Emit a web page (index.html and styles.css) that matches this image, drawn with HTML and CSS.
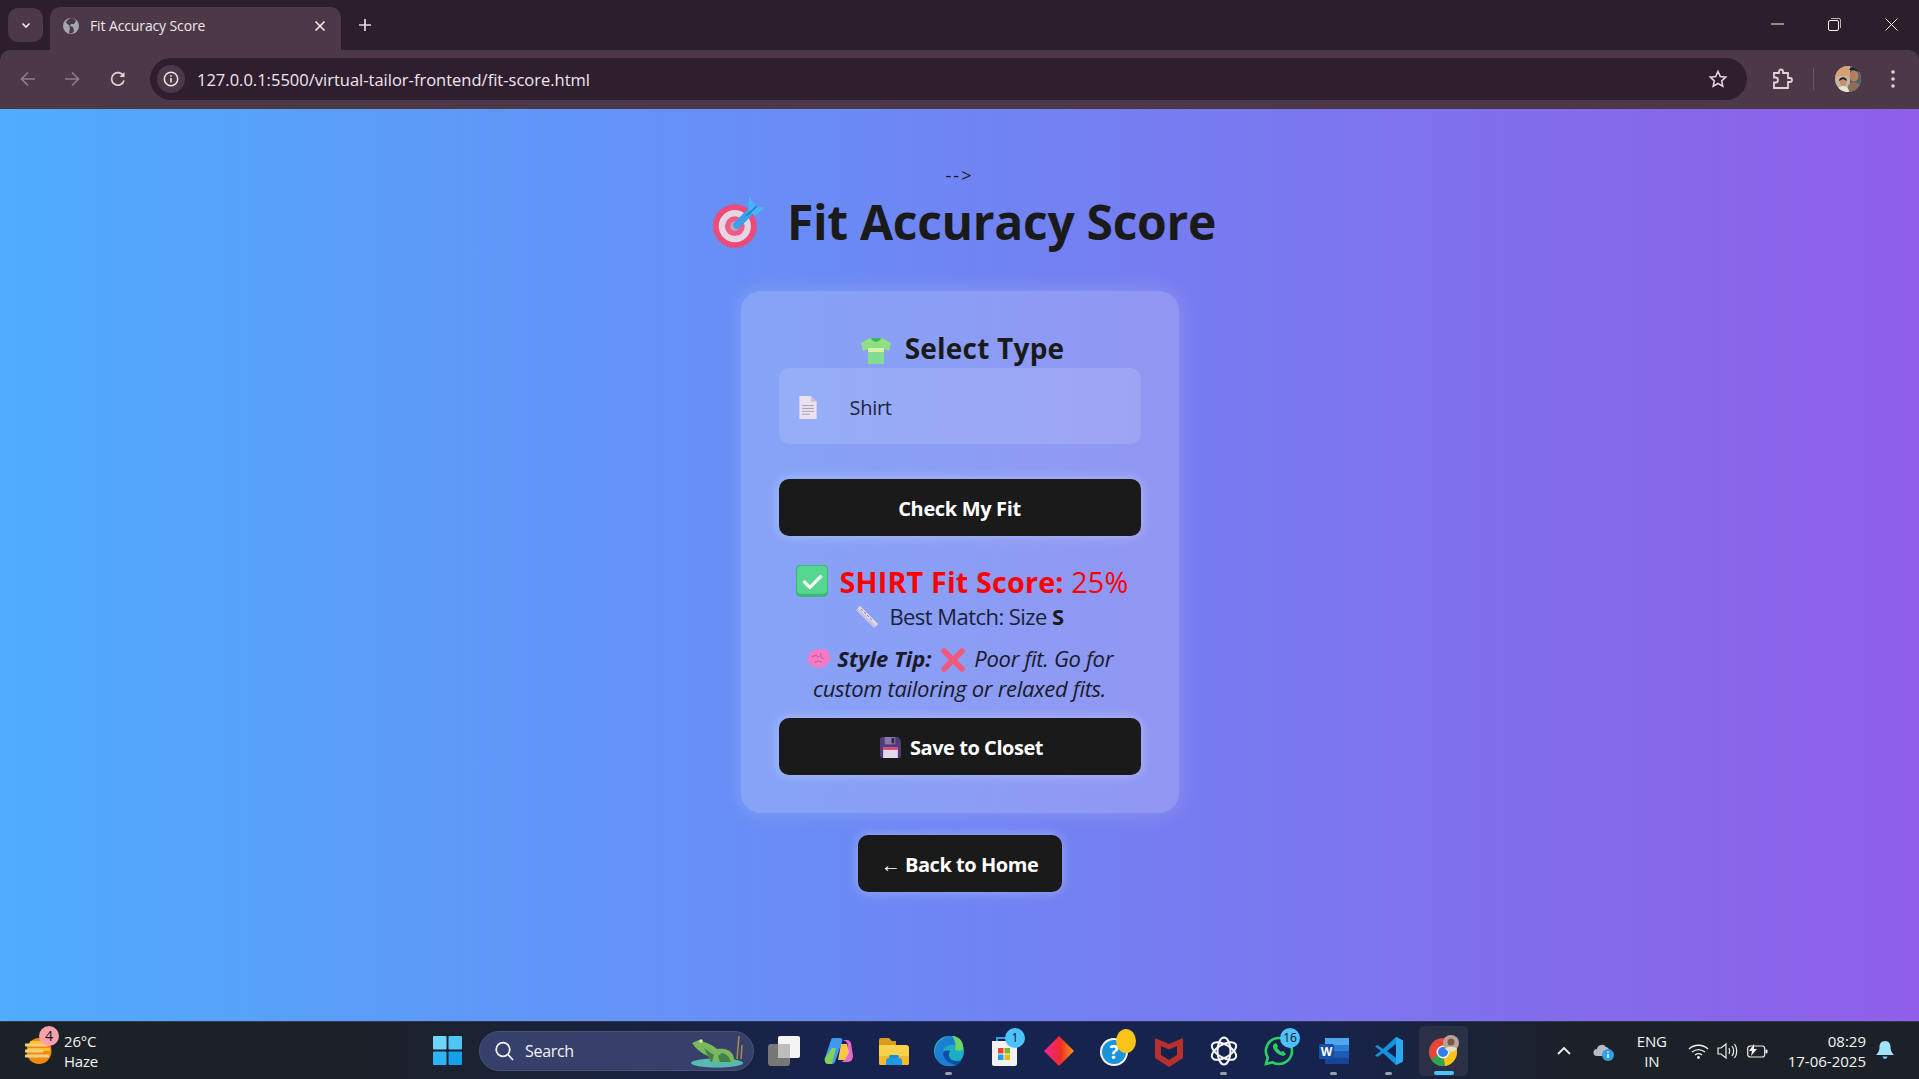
FILE: index.html
```html
<!DOCTYPE html>
<html lang="en">
<head>
<meta charset="utf-8">
<title>Fit Accuracy Score</title>
<link rel="stylesheet" href="styles.css">
</head>
<body>
<div class="window">
  <header class="tabstrip">
    <button class="tab-list"><svg width="12" height="12" viewBox="0 0 12 12"><path d="M2.500 4.500 6 8l3.500-3.500" fill="none" stroke="#f0e4ee" stroke-width="1.700"/></svg></button>
    <div class="tab">
      <svg class="favicon" width="18" height="18" viewBox="0 0 18 18"><circle cx="9" cy="9" r="8" fill="#a3a7ae"/><path d="M9 1c-3 1-5 3-5 5l3 2 1 3-1 5c2 1 4 0 5-2l-1-4-3-1 1-2 3 0 2-3C13 2 11 1 9 1z" fill="#4c3847"/></svg>
      <span class="tab-title">Fit Accuracy Score</span>
      <svg class="tab-close" width="12" height="12" viewBox="0 0 12 12"><path d="M1.500 1.500l9 9m0-9l-9 9" stroke="#f4ecf2" stroke-width="1.600"/></svg>
    </div>
    <svg class="new-tab" width="14" height="14" viewBox="0 0 14 14"><path d="M7 1v12M1 7h12" stroke="#e8d8e4" stroke-width="1.700"/></svg>
    <div class="win-controls">
      <svg width="13" height="13" viewBox="0 0 13 13"><path d="M0 6h13" stroke="#f2f2f2" stroke-width="1"/></svg>
      <svg width="13" height="13" viewBox="0 0 13 13"><rect x=".5" y="2.500" width="10" height="10" rx="1.500" fill="none" stroke="#f2f2f2"/><path d="M3 .5h8a1.500 1.500 0 0 1 1.500 1.500v8" fill="none" stroke="#b9b0b8"/></svg>
      <svg width="13" height="13" viewBox="0 0 13 13"><path d="M.5.500l12 12m0-12l-12 12" stroke="#f2f2f2" stroke-width="1"/></svg>
    </div>
  </header>
  <nav class="toolbar">
    <svg class="tool tool-back" width="18" height="18" viewBox="0 0 18 18"><path d="M16 9H3m6-6.500L2.500 9 9 15.500" fill="none" stroke="#8d7c8b" stroke-width="1.700"/></svg>
    <svg class="tool tool-forward" width="18" height="18" viewBox="0 0 18 18"><path d="M2 9h13M9 2.500 15.500 9 9 15.500" fill="none" stroke="#8d7c8b" stroke-width="1.700"/></svg>
    <svg class="tool tool-reload" width="18" height="18" viewBox="0 0 18 18"><path d="M14.500 6A6.300 6.300 0 1 0 15 10.500" fill="none" stroke="#e2d2de" stroke-width="1.700"/><path d="M15.500 2v5h-5z" fill="#e2d2de"/></svg>
    <div class="omnibox">
      <span class="site-info"><svg width="16" height="16" viewBox="0 0 16 16"><circle cx="8" cy="8" r="6.700" fill="none" stroke="#efe3ec" stroke-width="1.500"/><path d="M8 7v4.500M8 4.200v1.600" stroke="#efe3ec" stroke-width="1.600"/></svg></span>
      <span class="url">127.0.0.1:5500/virtual-tailor-frontend/fit-score.html</span>
      <svg class="star" width="20" height="20" viewBox="0 0 20 20"><path d="M10 2.500l2.300 5 5.400.6-4 3.700 1.100 5.400L10 14.500l-4.800 2.700 1.100-5.400-4-3.700 5.400-.6z" fill="none" stroke="#e2d2de" stroke-width="1.600"/></svg>
    </div>
    <svg class="ext" width="22" height="22" viewBox="0 0 22 22"><path d="M3 5h5V3.500a2 2 0 0 1 4 0V5h5v5h2a2 2 0 0 1 0 4h-2v6H3v-5.500h1.500a2.300 2.300 0 0 0 0-5H3z" fill="none" stroke="#e2d2de" stroke-width="1.800"/></svg>
    <span class="sep"></span>
    <svg class="avatar" width="26" height="26" viewBox="0 0 26 26"><defs><clipPath id="av"><circle cx="13" cy="13" r="13"/></clipPath></defs><g clip-path="url(#av)"><rect width="26" height="26" fill="#c9b5a5"/><rect x="15" width="11" height="26" fill="#4f6068"/><rect y="0" width="14" height="10" fill="#d9a070"/><ellipse cx="19" cy="10" rx="4.500" ry="5.500" fill="#b97d5c"/><path d="M14 4c2-4 9-4 10 2l-5-2z" fill="#1c2230"/><path d="M12 26c0-7 3-10 7-10s7 3 7 10z" fill="#8a7058"/><ellipse cx="8" cy="16" rx="3.500" ry="4" fill="#c4906c"/><path d="M4 15c0-5 8-5 8 0l-4-2z" fill="#222"/><path d="M2 26c0-4 3-6 6-6s6 2 6 6z" fill="#dfe8d0"/></g></svg>
    <svg class="menu" width="6" height="20" viewBox="0 0 6 20"><circle cx="3" cy="3" r="1.800" fill="#e2d2de"/><circle cx="3" cy="10" r="1.800" fill="#e2d2de"/><circle cx="3" cy="17" r="1.800" fill="#e2d2de"/></svg>
  </nav>

  <main class="page">
    <p class="stray">--&gt;</p>
    <h1 class="title">
      <svg class="emoji-target" viewBox="0 0 52 52"><circle cx="22" cy="30" r="21" fill="#ec4a78"/><circle cx="22" cy="30" r="15.500" fill="#e6d6e4"/><circle cx="22" cy="30" r="9.500" fill="#ef5a86"/><circle cx="22" cy="30" r="4.500" fill="#b8a8b8"/><path d="M24 29 36 17" stroke="#3aa0ea" stroke-width="7" stroke-linecap="round"/><path d="M35 15 36 1l6 10 9 1-9 8z" fill="#48b4f4"/><path d="M33 20 43 11" stroke="#1f7fd0" stroke-width="1.500"/></svg>
      <span>Fit Accuracy Score</span>
    </h1>
    <section class="card">
      <h2 class="card-heading">
        <svg class="emoji-shirt" viewBox="0 0 32 28"><path d="M10 1h12l9 5-2 8-5-2v15H8V12l-5 2-2-8z" fill="#8fe080"/><rect x="8" y="11" width="16" height="4" fill="#d8f0a8"/><path d="M8 15h16v12H8z" fill="#82dc92"/><path d="M11 1c1 5 9 5 10 0z" fill="#35b868"/></svg>
        <span>Select Type</span>
      </h2>
      <div class="select">
        <svg class="emoji-doc" viewBox="0 0 20 26"><path d="M1 1h12l6 6v18H1z" fill="#ebe2f0"/><path d="M13 1l6 6h-6z" fill="#cdc0d4"/><path d="M4 11h12M4 14h12M4 17h12M4 20h8" stroke="#a79bb0" stroke-width="1"/></svg>
        <span>Shirt</span>
      </div>
      <button class="btn btn-check">Check My Fit</button>
      <div class="score">
        <svg class="emoji-check" viewBox="0 0 30 30"><rect width="30" height="30" rx="4" fill="#3fb878"/><rect x="1" y="1" width="28" height="26" rx="4" fill="#57d690"/><path d="M7 15l6 6 11-11" fill="none" stroke="#f4fbf6" stroke-width="3"/></svg>
        <span class="score-text"><strong>SHIRT Fit Score:</strong> 25%</span>
      </div>
      <p class="match"><svg class="emoji-ruler" viewBox="0 0 24 24"><path d="M1 5 5 1 23 19 19 23z" fill="#c9c2dc"/><path d="M5 1l18 18-2 2L3 3z" fill="#dfd9ec"/><path d="M6 4l2 2M9 7l2 2M12 10l2 2M15 13l2 2" stroke="#9184a8" stroke-width="1"/></svg>Best Match: Size <strong>S</strong></p>
      <p class="tip">
        <svg class="emoji-brain" viewBox="0 0 24 22"><path d="M12 2c4-3 10 0 10 5 2 3 1 7-3 8 0 3-3 4-5 3l-2 3-1-3C7 19 1 16 1 10 1 5 7 0 12 2z" fill="#f27cc4"/><path d="M5 9c3-3 5-2 7 0m2-4c-2 3 0 5 3 5m-9 4c2-2 5-2 7 0" fill="none" stroke="#d652a6" stroke-width="1.100"/></svg>
        <strong>Style Tip:</strong>
        <svg class="emoji-x" viewBox="0 0 24 24"><path d="M3 3 21 21M21 3 3 21" stroke="#f2587a" stroke-width="5.500" stroke-linecap="round"/></svg>
        Poor fit. Go for custom tailoring or relaxed fits.
      </p>
      <button class="btn btn-save">
        <svg class="emoji-floppy" viewBox="0 0 20 20"><path d="M2 0h15l3 3v15a2 2 0 0 1-2 2H2a2 2 0 0 1-2-2V2a2 2 0 0 1 2-2z" fill="#4f3b78"/><rect x="4.500" y="0" width="10" height="7" fill="#8b7aa8"/><rect x="11" y="1" width="2.500" height="5" fill="#2e2446"/><rect x="3" y="10" width="14" height="10" fill="#e4d8ec"/><rect x="3" y="10" width="14" height="2.200" fill="#ea3a60"/></svg>
        Save to Closet
      </button>
    </section>
    <a class="btn btn-back">← Back to Home</a>
  </main>

  <footer class="taskbar">
    <div class="widget">
      <span class="weather">
        <svg width="28" height="28" viewBox="0 0 28 28"><ellipse cx="14" cy="14" rx="12.500" ry="13" fill="#f28a10"/><path d="M5 4h18v4H5zM3 11h22v3H3z" fill="#fac22e"/><path d="M1 8h20M1 14h16M1 19h22" stroke="#f0d080" stroke-width="3" stroke-linecap="round"/></svg>
        <span class="badge badge-pink">4</span>
      </span>
      <span class="weather-text"><span>26°C</span><span>Haze</span></span>
    </div>
    <div class="apps">
      <svg class="win" viewBox="0 0 30 30"><rect width="14" height="14" y="0" x="0" rx="1" fill="#6fd6fb"/><rect width="14" height="14" y="0" x="16" rx="1" fill="#4fc4f5"/><rect width="14" height="14" y="16" x="0" rx="1" fill="#2eb4f2"/><rect width="14" height="14" y="16" x="16" rx="1" fill="#16a0ec"/></svg>
      <div class="search">
        <svg width="22" height="22" viewBox="0 0 22 22"><circle cx="10" cy="9.500" r="6.800" fill="none" stroke="#f0f0f0" stroke-width="1.800"/><path d="M15 14.500l5 5.500" stroke="#f0f0f0" stroke-width="1.800"/></svg>
        <span>Search</span>
        <svg class="frog" width="56" height="36" viewBox="0 0 56 36"><ellipse cx="28" cy="30" rx="26" ry="4.500" fill="#58b9b0"/><path d="M48 26 50 3M52 26l1-14" stroke="#a08a50" stroke-width="1.600"/><path d="M3 10l7-3 5 2c6 2 10 4 13 7 6-1 13 0 16 6l2 7H24l-5-6C12 20 6 15 3 10z" fill="#79b85e"/><path d="M15 15l10 7-2 7h8l-2-6 4-3c4 1 7 3 9 9H22z" fill="#3f8248"/><circle cx="12" cy="8" r="1.800" fill="#e4e88a"/></svg>
      </div>
      <span class="slot">
        <svg width="32" height="30" viewBox="0 0 32 30"><rect x="0" y="8" width="22" height="22" rx="3" fill="#777"/><rect x="10" y="0" width="22" height="22" rx="2" fill="#f4f4f4"/><rect x="10" y="8" width="12" height="14" fill="#bdbdbd"/></svg>
      </span>
      <span class="slot">
        <svg width="30" height="30" viewBox="0 0 30 30"><path d="M9 2h7c2 0 3 2 2 4l-7 20c-1 2-3 2-4 2H4c-2 0-4-3-3-6L7 4c0-1 1-2 2-2z" fill="#3d9af0"/><path d="M8 12h4l-4 16H4c-2 0-4-3-3-6z" fill="#86cf5a"/><path d="M14 4h9c2 0 3 1 4 3l2 13c0 3-2 6-5 6h-8c3 0 4-2 5-4l3-12c0-3-2-5-5-6z" fill="#e46ad0"/><path d="M17 8h6l2 8-4 8h-7z" fill="#f9c54a"/></svg>
      </span>
      <span class="slot">
        <svg width="30" height="30" viewBox="0 0 30 30"><path d="M0 4a2 2 0 0 1 2-2h8l3 3h4v6H0z" fill="#d99c1c"/><path d="M0 9h27a3 3 0 0 1 3 3v15a2 2 0 0 1-2 2H2a2 2 0 0 1-2-2z" fill="#fbd24c"/><path d="M0 20h30v7a2 2 0 0 1-2 2H2a2 2 0 0 1-2-2z" fill="#f5b92b"/><rect x="10" y="19" width="10" height="3" rx="1.500" fill="#1a8fd8"/><path d="M7 29v-4c0-2 1-3 3-3h10c2 0 3 1 3 3v4z" fill="#1e9be0"/></svg>
      </span>
      <span class="slot has-dot">
        <svg width="30" height="32" viewBox="0 0 30 32"><circle cx="15" cy="16" r="15" fill="#1dadc6"/><path d="M1 17C2 5 12 1 18 1c8 0 12 8 11 13-6-6-20-6-20 4 0 7 8 12 14 12C12 34 1 29 1 17z" fill="#1d7ed4"/><path d="M18 1c8 0 12 7 11 13 0 2-6 2-8 1 2-6-1-11-3-14z" fill="#6dd65e"/><path d="M9 18c0 7 8 12 14 12 2-1 4-3 5-5-8 3-16-1-12-9-4-1-7 0-7 2z" fill="#0a4fa8"/></svg>
      </span>
      <span class="slot">
        <svg width="30" height="32" viewBox="0 0 30 32"><path d="M3 6h24a1 1 0 0 1 1 1v22a2 2 0 0 1-2 2H5a2 2 0 0 1-2-2z" fill="#f2f2f2"/><path d="M8 6V3h14v3" fill="none" stroke="#2f9fe0" stroke-width="2"/><rect x="9" y="13" width="5.500" height="5.500" fill="#e8462a"/><rect x="15.500" y="13" width="5.500" height="5.500" fill="#7cb82a"/><rect x="9" y="19.500" width="5.500" height="5.500" fill="#1fa0e6"/><rect x="15.500" y="19.500" width="5.500" height="5.500" fill="#f5b80f"/></svg>
        <span class="badge badge-blue">1</span>
      </span>
      <span class="slot">
        <svg width="30" height="30" viewBox="0 0 30 30"><defs><linearGradient id="dia" x1="0" x2="1"><stop offset="0" stop-color="#f0259a"/><stop offset=".55" stop-color="#f02b2b"/><stop offset="1" stop-color="#f59a10"/></linearGradient></defs><path d="M15 0 30 15 15 30 0 15z" fill="url(#dia)"/></svg>
      </span>
      <span class="slot">
        <svg width="30" height="30" viewBox="0 0 30 30"><circle cx="15" cy="16" r="14" fill="#f4f4f4"/><circle cx="15" cy="16" r="12" fill="#1a93d8"/><text x="15" y="23" class="help-mark">?</text></svg>
        <span class="badge badge-amber"></span>
      </span>
      <span class="slot">
        <svg width="28" height="32" viewBox="0 0 28 32"><path d="M0 3l14 6 14-6v20l-14 9L0 23z" fill="#b8302c"/><path d="M6 11l8 3.500 8-3.500v9l-8 5-8-5z" fill="#15214d"/></svg>
      </span>
      <span class="slot has-dot">
        <svg width="30" height="30" viewBox="0 0 30 30"><g fill="none" stroke="#f6f6f6" stroke-width="2"><ellipse cx="15" cy="15" rx="13.500" ry="6.500" transform="rotate(30 15 15)"/><ellipse cx="15" cy="15" rx="13.500" ry="6.500" transform="rotate(90 15 15)"/><ellipse cx="15" cy="15" rx="13.500" ry="6.500" transform="rotate(150 15 15)"/></g></svg>
      </span>
      <span class="slot">
        <svg width="30" height="30" viewBox="0 0 30 30"><path d="M15 2a13 13 0 0 1 0 26c-2.500 0-4.500-.6-6.500-1.700L2 28l1.800-6.300A13 13 0 0 1 15 2z" fill="none" stroke="#2bd063" stroke-width="2.600"/><path d="M10 8c-2 2-1 6 3 9s7 4 9 1l-3-3-2 1-4-4 1-2-2-3z" fill="#2bd063"/></svg>
        <span class="badge badge-blue">16</span>
      </span>
      <span class="slot has-dot">
        <svg width="30" height="30" viewBox="0 0 30 30"><rect x="6" y="2" width="24" height="26" rx="2" fill="#2b7ad4"/><rect x="6" y="2" width="24" height="7" fill="#4ea8ee"/><rect x="6" y="15" width="24" height="6.500" fill="#1c5cb4"/><rect x="6" y="21.500" width="24" height="6.500" fill="#154596"/><rect y="8" width="15" height="15" rx="1.500" fill="#164fa8"/><text x="7.500" y="20" class="word-mark">W</text></svg>
      </span>
      <span class="slot has-dot">
        <svg width="30" height="30" viewBox="0 0 30 30"><path d="M22 1l7 3.500v21L22 29 9 17l-5.500 4L1 19.500 7 15 1 10.500 3.500 9 9 13z" fill="#1591df"/><path d="M22 8 13 15l9 7z" fill="#15214d"/><path d="M22 1l7 3.500v21L22 29z" fill="#2aa9ee"/></svg>
      </span>
      <span class="slot slot-active">
        <svg width="32" height="32" viewBox="0 0 32 32"><circle cx="15" cy="17" r="14" fill="#e8453a"/><path d="M15 17 3 24a14 14 0 0 0 14 7z" fill="#2ea44f"/><path d="M15 17l2 14a14 14 0 0 0 12-14 14 14 0 0 0-2-8z" fill="#fbc419"/><circle cx="15" cy="17" r="6.500" fill="#f2f2f2"/><circle cx="15" cy="17" r="5" fill="#2f80ed"/><circle cx="23" cy="8" r="8" fill="#bba292"/><circle cx="23" cy="7" r="3.500" fill="#7a5a48"/><path d="M17 14c1-3 11-3 12 0a8 8 0 0 1-12 0z" fill="#e2ded0"/></svg>
      </span>
    </div>
    <div class="tray">
      <svg class="tray-chevron" width="14" height="10" viewBox="0 0 14 10"><path d="M1 8l6-6 6 6" fill="none" stroke="#f0f0f0" stroke-width="1.800"/></svg>
      <svg class="tray-cloud" width="22" height="20" viewBox="0 0 22 20"><path d="M4 15a3.500 3.500 0 0 1 0-7 5 5 0 0 1 9-2 4 4 0 0 1 3 6l-3 3z" fill="#b8bcc2"/><circle cx="15" cy="14" r="6" fill="#2f9fe8"/><path d="M15 13v4M15 10.500v1.300" stroke="#fff" stroke-width="1.400"/></svg>
      <span class="lang"><span>ENG</span><span>IN</span></span>
      <svg class="tray-wifi" width="21" height="16" viewBox="0 0 21 16"><path d="M1 6c5-5 14-5 19 0M4 9c4-3 9-3 13 0M7 12c2-1.500 5-1.500 7 0" fill="none" stroke="#f0f0f0" stroke-width="1.300"/><circle cx="10.500" cy="14.500" r="1.400" fill="#f0f0f0"/></svg>
      <svg class="tray-vol" width="21" height="18" viewBox="0 0 21 18"><path d="M1 6h3l5-4v14l-5-4H1z" fill="none" stroke="#f0f0f0" stroke-width="1.200"/><path d="M12 6c1 2 1 4 0 6M15 4c2 3 2 7 0 10M17.500 2c3 4 3 10 0 14" fill="none" stroke="#f0f0f0" stroke-width="1.200"/></svg>
      <svg class="tray-batt" width="21" height="14" viewBox="0 0 21 14"><rect x=".7" y="2" width="17" height="11" rx="2.500" fill="none" stroke="#f0f0f0" stroke-width="1.200"/><rect x="18.500" y="5.500" width="2" height="4" rx="1" fill="#f0f0f0"/><path d="M7 0 2 7h3l-1 5 6-7H7z" fill="#f0f0f0"/></svg>
      <span class="clock"><span>08:29</span><span>17-06-2025</span></span>
      <svg class="tray-bell" width="18" height="19" viewBox="0 0 18 19"><path d="M9 0c4 0 5.500 3 5.500 6 0 4 1.500 6 3.500 8H0c2-2 3.500-4 3.500-8 0-3 1.500-6 5.500-6z" fill="#9fe4fb"/><path d="M6.500 15.500h5a2.500 2.500 0 0 1-5 0z" fill="#6fcbe8"/></svg>
    </div>
  </footer>
</div>
</body>
</html>
```

FILE: styles.css
```css
* { box-sizing: border-box; }
html, body { margin: 0; height: 100%; overflow: hidden; }
body { font-family: "Open Sans", "Noto Sans", sans-serif; color: #1a1a1a; }
.window { height: 1079px; display: flex; flex-direction: column; background: #2d1e2c; }

/* tab strip */
.tabstrip { height: 50px; display: flex; align-items: flex-end; padding-left: 8px; flex: none; }
.tab-list { width: 35px; height: 34px; margin-bottom: 8px; background: #4c3847; border: 0; border-radius: 10px; display: flex; align-items: center; justify-content: center; padding: 0; }
.tab { width: 291px; height: 43px; margin-left: 7px; background: #4c3847; border-radius: 10px 10px 0 0; display: flex; align-items: center; padding: 0 15px 6px 12px; color: #efe6ec; font-size: 14px; letter-spacing: -.12px; }
.favicon { flex: none; margin-right: 10px; }
.tab-title { flex: 1; }
.new-tab { margin: 0 0 18px 17px; align-self: flex-end; }
.win-controls { margin-left: auto; align-self: flex-start; display: flex; gap: 44px; padding: 18px 21px 0 0; }

/* toolbar */
.toolbar { height: 59px; background: #4c3847; border-radius: 10px 10px 0 0; display: flex; align-items: center; flex: none; padding-left: 19px; padding-bottom: 1px; }
.tool-forward { margin-left: 26px; }
.tool-reload { margin-left: 28px; }
.omnibox { width: 1597px; height: 42px; margin-left: 23px; border-radius: 21px; background: #2f1f2e; display: flex; align-items: center; padding: 0 19px 0 7px; color: #f0e6ee; }
.site-info { width: 28px; height: 28px; border-radius: 50%; background: #4c3847; display: flex; align-items: center; justify-content: center; flex: none; }
.url { font-size: 16.5px; margin-left: 12px; flex: 1; }
.ext { margin-left: 24px; }
.sep { width: 1px; height: 22px; background: #6b5668; margin-left: 20px; }
.avatar { margin-left: 21px; }
.menu { margin-left: 29px; }

/* page */
.page { flex: 1; background: linear-gradient(to right, #4facfe, #8f5ee8); display: flex; flex-direction: column; align-items: center; min-height: 0; }
.stray { margin: 55px 0 0; font-size: 18px; line-height: 22px; letter-spacing: 2px; color: #1a1a1a; }
.title { margin: 3px 0 0 9px; display: flex; align-items: center; gap: 21px; font-size: 48px; line-height: 66px; font-weight: 700; letter-spacing: -.3px; color: #1a1a1a; height: 66px; }
.emoji-target { width: 54px; height: 54px; }
.card { width: 438px; height: 522px; margin-top: 36px; padding: 38px 38px 0; background: rgba(255,255,255,.2); border-radius: 20px; box-shadow: 0 0 20px rgba(255,255,255,.18); display: flex; flex-direction: column; align-items: stretch; }
.card-heading { margin: 0; height: 39px; padding-left: 5px; display: flex; align-items: center; justify-content: center; gap: 13px; font-size: 28px; line-height: 39px; font-weight: 700; letter-spacing: .22px; }
.emoji-shirt { width: 32px; height: 28px; margin-top: 4px; }
.select { height: 76px; background: rgba(255,255,255,.13); border-radius: 10px; display: flex; align-items: center; gap: 32px; padding: 2px 0 0 19px; font-size: 20px; color: #1f2540; letter-spacing: -.3px; }
.emoji-doc { width: 20px; height: 25px; }
.btn { background: #1a1a1a; color: #fff; border: 0; border-radius: 10px; font: 700 20px "Open Sans", sans-serif; letter-spacing: -.35px; height: 57px; display: flex; align-items: center; justify-content: center; box-shadow: 0 0 12px rgba(255,255,255,.35); padding: 1px 0 0; }
.btn-check { margin-top: 35px; }
.score { margin-top: 26px; padding-left: 5px; display: flex; align-items: center; justify-content: center; gap: 12px; height: 38px; color: #ff0000; font-size: 28.8px; letter-spacing: .13px; }
.score-text { white-space: nowrap; }
.emoji-check { width: 32px; height: 32px; }
.match { margin: 0; height: 34px; line-height: 33px; text-align: center; font-size: 22px; letter-spacing: -.55px; color: #1a1f3a; }
.match strong { color: #1a1a1a; }
.emoji-ruler { width: 24px; height: 24px; margin-right: 10px; vertical-align: -4px; }
.tip { margin: 9px 0 0; padding: 0 20px; height: 61px; font-size: 22px; line-height: 30px; font-style: italic; text-align: center; letter-spacing: -.3px; color: #1a1a2a; }
.tip strong { letter-spacing: 0; }
.emoji-brain { width: 26px; height: 23px; vertical-align: -4px; }
.emoji-x { width: 24px; height: 24px; vertical-align: -5px; margin: 0 4px; }
.btn-save { margin-top: 14px; gap: 9px; letter-spacing: -.45px; padding-left: 4px; }
.emoji-floppy { width: 21px; height: 21px; }
.btn-back { width: 204px; margin-top: 22px; letter-spacing: -.45px; }

/* taskbar */
.taskbar { height: 58px; flex: none; background: linear-gradient(to right, #1c2128 0, #1c2128 18%, #16234f 45%, #16234f 68%, #1c2128 82%); border-top: 1px solid #303750; display: flex; align-items: center; color: #f4f4f4; }
.widget { width: 433px; display: flex; align-items: center; padding-left: 25px; gap: 11px; flex: none; }
.weather { position: relative; display: flex; }
.weather-text, .lang, .clock { display: flex; flex-direction: column; font-size: 15px; line-height: 20px; letter-spacing: -.2px; }
.apps { display: flex; align-items: center; }
.win { width: 29px; height: 29px; }
.search { width: 275px; height: 40px; margin-left: 17px; border-radius: 20px; background: #36406b; border: 1px solid #4a5378; display: flex; align-items: center; padding-left: 13px; gap: 10px; font-size: 16px; letter-spacing: -.3px; position: relative; }
.frog { position: absolute; right: 8px; top: 1px; }
.slot { width: 55px; height: 50px; display: flex; align-items: center; justify-content: center; position: relative; flex: none; }
.slot:nth-child(3) { margin-left: 2px; }
.has-dot::after { content: ""; position: absolute; left: 50%; bottom: 1px; width: 7px; height: 3px; margin-left: -3.500px; border-radius: 2px; background: #9aa0aa; }
.slot-active { width: 49px; margin-left: 3px; background: #2a3045; border-radius: 5px; }
.slot-active::after { content: ""; position: absolute; left: 50%; bottom: 1px; width: 20px; height: 4px; margin-left: -10px; border-radius: 2px; background: #4cc2ff; }
.badge { position: absolute; border-radius: 50%; display: flex; align-items: center; justify-content: center; font-size: 12px; color: #111; height: 20px; min-width: 20px; }
.badge-pink { background: #f7a1ad; left: 14px; top: -11px; font-size: 14px; }
.badge-blue { background: #4cc2ff; top: 2px; right: 6px; }
.badge-amber { background: #f9c41a; top: 3px; right: 5px; width: 20px; height: 24px; }
.help-mark { font: 700 19px "Open Sans", sans-serif; fill: #fff; text-anchor: middle; }
.word-mark { font: 700 12px "Open Sans", sans-serif; fill: #fff; text-anchor: middle; }
.tray { margin-left: auto; display: flex; align-items: center; padding-right: 25px; }
.tray-cloud { margin-left: 22px; }
.lang { align-items: center; margin-left: 22px; }
.tray-wifi { margin-left: 21px; }
.tray-vol { margin-left: 8px; }
.tray-batt { margin-left: 9px; }
.clock { align-items: flex-end; margin-left: 20px; letter-spacing: 0; }
.tray-bell { margin-left: 10px; }
```
